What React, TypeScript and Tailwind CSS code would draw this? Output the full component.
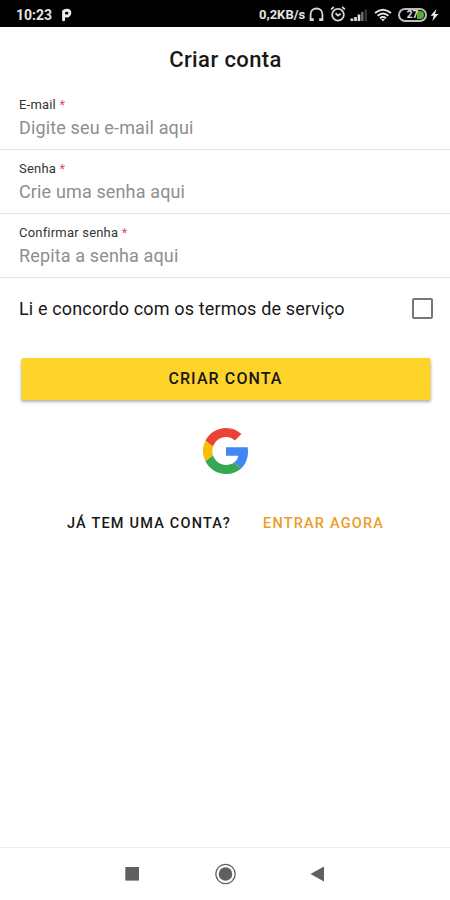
const StatusBar = () => {
  return (
    <header className="flex h-[27px] shrink-0 items-center bg-black pt-[3px] text-[#e4e4e4]">
      <span className="ml-4 w-[45px] text-[14px] leading-4 font-bold">10:23</span>
      <svg width="11" height="14" viewBox="0 0 11 14" fill="none">
        <path d="M2.6 11.8V3.4C4.8 1.4 8.8 2 8.8 5S6.2 8.4 5 7.9" stroke="#eee" strokeWidth="3" strokeLinecap="round" />
      </svg>
      <span className="ml-auto w-[50px] text-[13px] leading-4 font-bold">0,2KB/s</span>
      <svg width="16" height="16" viewBox="0 0 16 16" fill="none" stroke="#d6d6d6" strokeWidth="1.8">
        <path d="M1.6 12V7.2C1.6 3.6 4.3 1.5 7.5 1.5S13.4 3.6 13.4 7.2V12" />
        <path d="M.7 12.6H4.8M10.2 12.6h4.1" strokeWidth="2.6" />
      </svg>
      <svg className="mb-[2px] ml-[5px]" width="16" height="16" viewBox="0 0 15 15" fill="none" stroke="#d6d6d6" strokeWidth="1.7">
        <circle cx="7.5" cy="8.2" r="5.5" />
        <path d="M1 3.2L3.6 1M14 3.2L11.4 1M5.2 6.8L7.5 9L10 7.2" />
      </svg>
      <svg className="ml-1" width="18" height="14" viewBox="0 0 18 14">
        <path d="M.5 10.5h2.8V13H.5zM4.2 9h2.6v4H4.2zM7.7 6.5h2.6V13H7.7z" fill="#e0e0e0" />
        <path d="M11.2 4h2.2v9h-2.2z" fill="#777" />
        <path d="M14.6 1.5H17V13h-2.4z" fill="#383838" />
      </svg>
      <svg className="ml-[6px]" width="18" height="14" viewBox="0 0 18 14" fill="none" stroke="#e4e4e4" strokeWidth="2">
        <path d="M1 5Q9-1.6 17 5M3.6 7.7Q9 3.2 14.4 7.7M6 10.2Q9 7.8 12 10.2" />
        <path d="M7 11h4L9 13.5z" fill="#e4e4e4" stroke="none" />
      </svg>
      <span className="mb-px ml-[6px] flex h-[14px] w-[29px] items-center justify-center rounded-full border-2 border-[#bdbdbd] bg-black p-px text-[10px] leading-none font-bold">
        <span className="flex h-full w-full items-center justify-center rounded-full bg-[linear-gradient(90deg,#000_68%,#50ad35_68%)]">27</span>
      </span>
      <svg className="mr-[11px] ml-[3px]" width="9" height="14" viewBox="0 0 9 14" fill="#eee">
        <path d="M6.4 1L.6 7.8h3L2.4 13L8.4 6H5.1z" />
      </svg>
    </header>
  );
};

const Field = ({ label, placeholder }: { label: string; placeholder: string }) => {
  return (
    <label className="flex h-16 flex-col border-b-[1.5px] border-[#e2e2e2] pt-[11px] pl-[19px]">
      <span className="text-[13px] leading-4 tracking-[0.2px] text-[#333]">
        {label} <span className="text-[#e0505c]">*</span>
      </span>
      <input
        className="mt-[2px] h-[25px] w-full bg-transparent text-[18px] tracking-[0.14px] outline-none placeholder:text-[#8e8e8e]"
        placeholder={placeholder}
      />
    </label>
  );
};

const NavBar = () => {
  return (
    <nav className="flex h-[53px] shrink-0 items-center justify-center border-t border-[#eee]">
      <svg width="202" height="24" viewBox="0 0 202 24" fill="#606060">
        <path d="M1.3 5h13.7v13.6H1.3z" />
        <circle cx="101.5" cy="12" r="6.8" />
        <circle cx="101.5" cy="12" r="9.7" fill="none" stroke="#606060" strokeWidth="1.3" />
        <path d="M186.5 12L200 4.5v15z" />
      </svg>
    </nav>
  );
};

export default function App() {
  return (
    <div className="flex h-[900px] w-[450px] flex-col bg-white font-['Roboto',sans-serif] text-[#181818]">
      <StatusBar />
      <main className="flex-1">
        <h1 className="pt-[19px] pl-px text-center text-[22px] leading-7 font-medium tracking-[0.4px]">Criar conta</h1>

        <div className="mt-3">
          <Field label="E-mail" placeholder="Digite seu e-mail aqui" />
          <Field label="Senha" placeholder="Crie uma senha aqui" />
          <Field label="Confirmar senha" placeholder="Repita a senha aqui" />
        </div>

        <label className="flex h-[62px] items-center justify-between pr-[17px] pb-px pl-[19px] text-[18px] tracking-[0.15px]">
          Li e concordo com os termos de serviço
          <input type="checkbox" className="size-[21px] appearance-none rounded-[2px] border-2 border-[#777]" />
        </label>

        <button className="mx-auto mt-[18px] flex h-[42px] w-[409px] translate-x-[0.5px] items-center justify-center rounded-[2px] bg-[#fed32a] text-[16px] font-medium tracking-[1.1px] shadow-[0_2px_3px_rgba(0,0,0,0.3)]">
          CRIAR CONTA
        </button>

        <svg className="mt-[28px] ml-[203px]" width="46" height="46" viewBox="0 0 48 48">
          <path fill="#ea4335" d="M24 9.5c3.54 0 6.71 1.22 9.21 3.6l6.85-6.85C35.9 2.38 30.47 0 24 0 14.62 0 6.51 5.38 2.56 13.22l7.98 6.19C12.43 13.72 17.74 9.5 24 9.5z" />
          <path fill="#4285f4" d="M46.98 24.55c0-1.57-.15-3.09-.38-4.55H24v9.02h12.94c-.58 2.96-2.26 5.48-4.78 7.18l7.73 6c4.51-4.18 7.09-10.36 7.09-17.65z" />
          <path fill="#fbbc05" d="M10.53 28.59A14.5 14.5 0 0 1 10.54 19.41l-7.98-6.19A24 24 0 0 0 2.56 34.78l7.97-6.19z" />
          <path fill="#34a853" d="M24 48c6.48 0 11.93-2.13 15.89-5.81l-7.73-6c-2.15 1.45-4.92 2.3-8.16 2.3-6.26 0-11.57-4.22-13.47-9.91l-7.98 6.19C6.51 42.62 14.62 48 24 48z" />
        </svg>

        <div className="mt-[40px] flex pl-[67px] text-[14.5px] leading-5 font-medium tracking-[1.2px]">
          <span className="w-[196px]">JÁ TEM UMA CONTA?</span>
          <a className="text-[#eb9d27]">ENTRAR AGORA</a>
        </div>
      </main>
      <NavBar />
    </div>
  );
}
